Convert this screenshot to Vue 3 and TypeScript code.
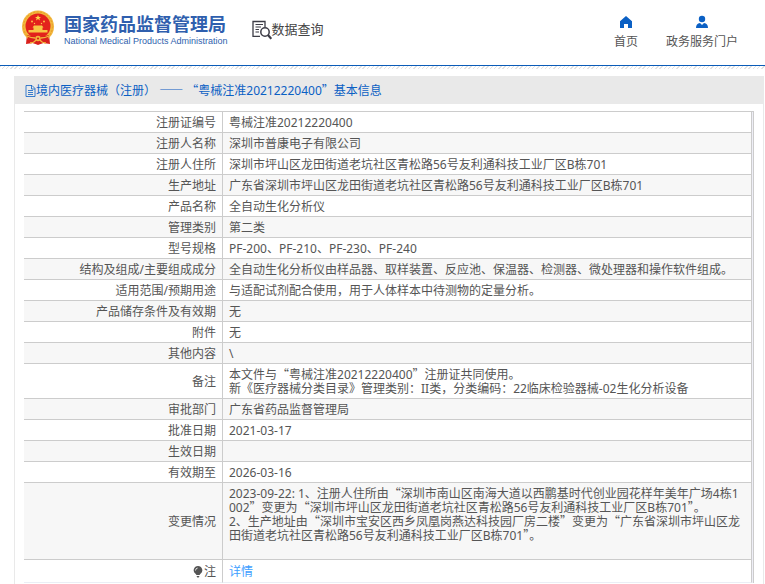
<script setup lang="ts">
interface Row {
  label: string
  lines: string[]
}

const title = '境内医疗器械（注册） —— “粤械注准20212220400”基本信息'

const rows: Row[] = [
  { label: '注册证编号', lines: ['粤械注准20212220400'] },
  { label: '注册人名称', lines: ['深圳市普康电子有限公司'] },
  { label: '注册人住所', lines: ['深圳市坪山区龙田街道老坑社区青松路56号友利通科技工业厂区B栋701'] },
  { label: '生产地址', lines: ['广东省深圳市坪山区龙田街道老坑社区青松路56号友利通科技工业厂区B栋701'] },
  { label: '产品名称', lines: ['全自动生化分析仪'] },
  { label: '管理类别', lines: ['第二类'] },
  { label: '型号规格', lines: ['PF-200、PF-210、PF-230、PF-240'] },
  { label: '结构及组成/主要组成成分', lines: ['全自动生化分析仪由样品器、取样装置、反应池、保温器、检测器、微处理器和操作软件组成。'] },
  { label: '适用范围/预期用途', lines: ['与适配试剂配合使用，用于人体样本中待测物的定量分析。'] },
  { label: '产品储存条件及有效期', lines: ['无'] },
  { label: '附件', lines: ['无'] },
  { label: '其他内容', lines: ['\\'] },
  {
    label: '备注',
    lines: [
      '本文件与“粤械注准20212220400”注册证共同使用。',
      '新《医疗器械分类目录》管理类别：II类，分类编码：22临床检验器械-02生化分析设备',
    ],
  },
  { label: '审批部门', lines: ['广东省药品监督管理局'] },
  { label: '批准日期', lines: ['2021-03-17'] },
  { label: '生效日期', lines: [''] },
  { label: '有效期至', lines: ['2026-03-16'] },
  {
    label: '变更情况',
    lines: [
      '2023-09-22: 1、注册人住所由“深圳市南山区南海大道以西鹏基时代创业园花样年美年广场4栋1',
      '002”变更为“深圳市坪山区龙田街道老坑社区青松路56号友利通科技工业厂区B栋701”。',
      '2、生产地址由“深圳市宝安区西乡凤凰岗燕达科技园厂房二楼”变更为“广东省深圳市坪山区龙',
      '田街道老坑社区青松路56号友利通科技工业厂区B栋701”。',
      '',
    ],
  },
]

// Curly quotes and dashes are set in the Chinese face so they keep full width.
const runs = (text: string): string[] => text.split(/([“”—]+)/).filter((s) => s !== '')
const isWide = (run: string): boolean => /^[“”—]/.test(run)
</script>

<template>
  <div class="page" lang="zh-CN">
    <header class="header">
      <div class="brand">
        <svg class="emblem" viewBox="0 0 34 36" aria-hidden="true">
          <path d="M6 24 L5 34 L12 33 L17 35 L22 33 L29 34 L28 24 Z" fill="#d9201c" />
          <circle cx="17" cy="16.500" r="16" fill="#f3b73c" />
          <circle cx="17" cy="16.500" r="14.500" fill="none" stroke="#e59c2a" stroke-width="1" stroke-dasharray="2 1.500" />
          <circle cx="17" cy="16" r="12.500" fill="#e3211c" />
          <path d="M17 5l.9 2h2.100l-1.700 1.300.7 2.100-2-1.300-2 1.300.7-2.100L14 7h2.100z" fill="#ffd84a" />
          <g fill="#ffc94a">
            <circle cx="11" cy="11.500" r=".9" /><circle cx="23" cy="11.500" r=".9" />
            <circle cx="13.500" cy="13.500" r=".7" /><circle cx="20.500" cy="13.500" r=".7" />
          </g>
          <path d="M13 15.500h8l1.500 2h-11zM12.500 17.500h9v2.500h-9zM7.500 20h19v2.500h-19z" fill="#f8c545" />
          <path d="M6 25q11 3 22 0l-2 7q-9 3-18 0z" fill="#d9201c" />
          <path d="M6 26q4 2 8 2M28 26q-4 2-8 2M9 33q4 0 6-3M25 33q-4 0-6-3" fill="none" stroke="#f3b73c" stroke-width="1.300" />
          <circle cx="17" cy="28.500" r="2.800" fill="#f3b73c" />
          <circle cx="17" cy="28.500" r="1.100" fill="#d9201c" />
        </svg>
        <div class="names">
          <div class="name-zh">国家药品监督管理局</div>
          <div class="name-en">National Medical Products Administration</div>
        </div>
      </div>
      <div class="section">
        <svg class="section-icon" viewBox="0 0 20 20" aria-hidden="true">
          <g fill="none" stroke="#3c3c46">
            <path d="M8 16.300H1V1.500H13V7" stroke-width="1.300" />
            <path d="M3.500 4.500H11M3.500 7H9M3.500 9.500H7M3.500 12H7" stroke-width="1.100" />
            <circle cx="13" cy="12" r="4.200" stroke-width="1.500" />
            <path d="M16 15l3.300 3.800" stroke-width="2.200" />
          </g>
        </svg>
        <span>数据查询</span>
      </div>
      <nav class="nav">
        <a href="#home">
          <svg viewBox="0 0 14 14" aria-hidden="true">
            <path d="M7 1L1 6.200V13H5V9H9V13H13V6.200Z" fill="#0b60c4" />
          </svg>
          <span>首页</span>
        </a>
        <a href="#portal">
          <svg viewBox="0 0 14 14" aria-hidden="true">
            <circle cx="7" cy="4" r="3.200" fill="#0b60c4" />
            <path d="M1 13q0-4.500 4-5l2 2 2-2q4 .5 4 5z" fill="#0b60c4" />
          </svg>
          <span>政务服务门户</span>
        </a>
      </nav>
    </header>
    <div class="hatch"></div>

    <main class="panel">
      <h1 class="title">
        <svg class="doc" viewBox="0 0 11 12" aria-hidden="true">
          <path d="M1 .5H7L10 3.500V11.500H1ZM6.500 .5V4H10M3 5.500H8M3 7.500H8M3 9.500H8" fill="none" stroke="#0b60c4" stroke-width=".8" />
        </svg>
        <span><span v-for="(run, i) in runs(title)" :key="i" :class="{ wide: isWide(run) }">{{ run }}</span></span>
      </h1>
      <div class="frame">
        <table class="info">
          <tbody>
            <tr v-for="row in rows" :key="row.label">
              <th scope="row">{{ row.label }}</th>
              <td>
                <div v-for="(line, n) in row.lines" :key="n" class="line">
                  <span v-for="(run, i) in runs(line)" :key="i" :class="{ wide: isWide(run) }">{{ run }}</span>
                </div>
              </td>
            </tr>
            <tr class="note">
              <th scope="row">
                <span class="note-label">
                  <svg class="bulb" viewBox="0 0 10 12" aria-hidden="true">
                    <path d="M5 0a4.300 4.300 0 0 1 2.500 7.800L6.500 9h-3L2.500 7.800A4.300 4.300 0 0 1 5 0zM3.500 10h3l-.8 1.500H4.300z" fill="#555" />
                    <path d="M2.500 4.500Q2.500 2.300 4.700 2" fill="none" stroke="#fff" stroke-width=".8" />
                  </svg>注
                </span>
              </th>
              <td><a href="#detail">详情</a></td>
            </tr>
          </tbody>
        </table>
      </div>
    </main>
  </div>
</template>

<style>
body {
  margin: 0;
  background: #fff;
}
</style>

<style scoped>
.page {
  display: flex;
  flex-direction: column;
  min-height: 100vh;
  font-family: "Noto Sans", "Noto Sans CJK SC", sans-serif;
  font-size: 12px;
  line-height: 14px;
  color: #555;
}
.wide {
  font-family: "Noto Sans CJK SC", sans-serif;
  line-height: 1px;
}
.header {
  display: flex;
  align-items: flex-start;
  height: 65px;
  padding: 0 27px 0 21px;
  border-bottom: 1px solid #0b5cb8;
}
.brand {
  display: flex;
  gap: 9px;
  padding-top: 10px;
}
.emblem {
  width: 34px;
  height: 36px;
}
.names {
  padding-top: 3px;
  color: #2f5fae;
  white-space: nowrap;
}
.name-zh {
  font-size: 18px;
  font-weight: 700;
  line-height: 22px;
}
.name-en {
  font-family: "Liberation Sans", sans-serif;
  font-size: 9px;
  line-height: 12px;
}
.section {
  display: flex;
  align-items: flex-start;
  padding: 20px 0 0 24px;
  font-size: 13px;
  line-height: 18px;
  color: #444;
}
.section-icon {
  width: 20px;
  height: 20px;
}
.nav {
  display: flex;
  gap: 28px;
  margin-left: auto;
  padding-top: 15px;
}
.nav a {
  display: flex;
  flex-direction: column;
  align-items: center;
  gap: 6px;
  color: #555;
  text-decoration: none;
}
.nav svg {
  width: 14px;
  height: 14px;
}
.hatch {
  height: 3px;
  background: repeating-linear-gradient(135deg, #e2e2e2 0 1px, #fff 1px 3px);
}
.panel {
  flex: 1;
  margin: 7px 1px 0 14px;
  border: solid #e9e9e9;
  border-width: 0 1px;
}
.title {
  display: flex;
  align-items: center;
  margin: 0;
  padding: 8px 10px 6px;
  font-size: 12px;
  font-weight: 400;
  line-height: 14px;
  color: #0b60c4;
  background: #e9e9e9;
}
.doc {
  width: 11px;
  height: 12px;
}
.frame {
  margin: 7px 9px 0;
  padding-right: 1px;
  border: solid #ccc;
  border-width: 1px 1px 0 0;
  background: #eeeef6;
}
.info {
  width: 100%;
  border-spacing: 0;
  background: #fff;
}
th,
td {
  padding: 4px 6px 2px;
  border-right: 1px solid #ccc;
  border-bottom: 1px solid #ccc;
  font-weight: 400;
}
th {
  width: 186px;
  text-align: right;
}
td {
  text-align: left;
}
tr:nth-child(even) {
  background: #f7f7f7;
}
.line {
  min-height: 14px;
}
.info .note {
  background: #fff;
}
.note th,
.note td {
  padding: 5px 6px 3px;
  border-bottom-color: #ebeef5;
}
.note-label {
  display: flex;
  align-items: center;
  justify-content: flex-end;
  gap: 1px;
}
.bulb {
  width: 10px;
  height: 12px;
}
.note a {
  color: #409eff;
  text-decoration: none;
}
</style>
